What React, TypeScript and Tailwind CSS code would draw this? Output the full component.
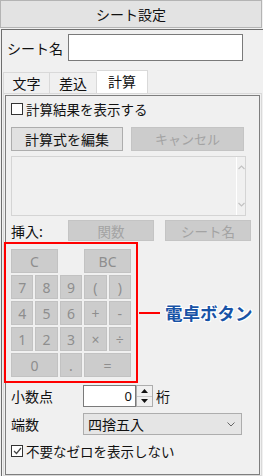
const jp = "font-['Noto_Sans_CJK_JP','Noto_Sans',sans-serif]";
const latin = "font-['Noto_Sans','Liberation_Sans',sans-serif]";

const CalcKey = ({ label, span }: { label: string; span?: boolean }) => (
  <div
    className={`${span ? "col-span-2" : ""} h-[24px] bg-[#cccccc] border border-[#c2c2c2] flex items-center justify-center text-[14px] text-[#8e8e8e] ${latin}`}
  >
    {label}
  </div>
);

const App = () => {
  return (
    <div className={`w-[263px] h-[476px] bg-[#f0f0f0] flex flex-col overflow-hidden text-[#111] ${jp}`}>
      {/* title */}
      <div className="h-[28px] w-[262px] shrink-0 border border-[#b4b4b4] bg-[#e3e3e3] flex items-center justify-center text-[14px] leading-[16px]">
        シート設定
      </div>

      <div className="mt-[1px] ml-[1px] flex-1 flex flex-col border-l border-t border-[#6e6e6e] min-h-0">
        {/* sheet name */}
        <div className="mt-[4px] h-[27px] flex items-center">
          <span className="pl-[5px] w-[66px] text-[14px] leading-[16px]">シート名</span>
          <div className="w-[175px] h-[27px] bg-white border border-[#7a7a7a]" />
        </div>

        {/* tabs */}
        <div className="mt-[9px] ml-[1px] h-[23px] flex items-end">
          <div className="w-[47px] h-[21px] border border-b-0 border-[#d9d9d9] flex items-center justify-center text-[14px] leading-[16px]">
            文字
          </div>
          <div className="w-[47px] h-[21px] border border-b-0 border-l-0 border-[#d9d9d9] flex items-center justify-center text-[14px] leading-[16px]">
            差込
          </div>
          <div className="w-[51px] h-[23px] bg-white border border-b-0 border-l-0 border-[#d9d9d9] flex items-center justify-center text-[14px] leading-[16px] pb-[2px]">
            計算
          </div>
        </div>

        <div className="ml-[1px] w-[259px] flex-1 border border-[#d9d9d9] p-[1px] min-h-0">
          <div className="h-[380px] border border-[#7e7e7e] bg-[#f0f0f0] flex flex-col">
            {/* show result */}
            <div className="mt-[4px] h-[18px] pl-[5px] flex items-center">
              <div className="w-[12px] h-[12px] border border-[#333] bg-white" />
              <span className="ml-[3px] text-[13.5px] leading-[16px]">計算結果を表示する</span>
            </div>

            {/* edit buttons */}
            <div className="mt-[9px] pl-[5px] flex">
              <div className="w-[112px] h-[24px] bg-[#e1e1e1] border border-[#adadad] flex items-center justify-center text-[14px] leading-[16px]">
                計算式を編集
              </div>
              <div className="ml-[8px] w-[113px] h-[24px] bg-[#cccccc] border border-[#c4c4c4] flex items-center justify-center text-[13px] leading-[16px] text-[#a3a3a3]">
                キャンセル
              </div>
            </div>

            {/* formula box */}
            <div className="mt-[5px] ml-[5px] w-[235px] h-[60px] border border-[#d4d4d4] flex">
              <div className="flex-1" />
              <div className="w-[9px] border-l border-white flex flex-col items-center justify-between py-[8px]">
                <svg width="7" height="5" viewBox="0 0 7 5">
                  <polyline points="0.5,4 3.5,1 6.5,4" fill="none" stroke="#c2c2c2" strokeWidth="1.2" />
                </svg>
                <svg width="7" height="5" viewBox="0 0 7 5">
                  <polyline points="0.5,1 3.5,4 6.5,1" fill="none" stroke="#c2c2c2" strokeWidth="1.2" />
                </svg>
              </div>
            </div>

            {/* insert */}
            <div className="mt-[4px] h-[21px] flex items-center">
              <span className="pl-[5px] w-[62px] text-[14px] leading-[16px]">挿入:</span>
              <div className="w-[86px] h-[21px] bg-[#cccccc] border border-[#c4c4c4] flex items-center justify-center text-[13.5px] leading-[16px] text-[#a3a3a3]">
                関数
              </div>
              <div className="ml-[11px] w-[86px] h-[21px] bg-[#cccccc] border border-[#c4c4c4] flex items-center justify-center text-[13.5px] leading-[16px] text-[#a3a3a3]">
                シート名
              </div>
            </div>

            {/* calculator keys */}
            <div className="mt-[1px] -ml-[2px] flex items-center">
              <div className="border-2 border-[#ff0000] px-[5px] pt-[5px] pb-[4px]">
                <div className="w-[120px] grid grid-cols-5 gap-x-[2px] gap-y-[2px]">
                  <CalcKey label="C" span />
                  <div />
                  <CalcKey label="BC" span />
                  <CalcKey label="7" />
                  <CalcKey label="8" />
                  <CalcKey label="9" />
                  <CalcKey label="(" />
                  <CalcKey label=")" />
                  <CalcKey label="4" />
                  <CalcKey label="5" />
                  <CalcKey label="6" />
                  <CalcKey label="+" />
                  <CalcKey label="-" />
                  <CalcKey label="1" />
                  <CalcKey label="2" />
                  <CalcKey label="3" />
                  <CalcKey label="×" />
                  <CalcKey label="÷" />
                  <CalcKey label="0" span />
                  <CalcKey label="." />
                  <CalcKey label="=" span />
                </div>
              </div>
              <div className="ml-[1px] w-[21px] h-[2px] bg-[#ff0000]" />
              <span className="ml-[5px] text-[17.5px] leading-[20px] font-bold text-[#1853a6] [text-shadow:0_0_2px_#fff,1px_1px_0_#fff,-1px_-1px_0_#fff,1px_-1px_0_#fff,-1px_1px_0_#fff]">
                電卓ボタン
              </span>
            </div>

            {/* decimal places */}
            <div className="mt-[2px] h-[22px] flex items-center">
              <span className="pl-[5px] w-[77px] text-[14px] leading-[16px]">小数点</span>
              <div className="w-[53px] h-[22px] bg-white border border-[#7a7a7a] flex items-center justify-end pr-[3px] text-[13px] leading-[16px]">
                <span className={latin}>0</span>
              </div>
              <div className="w-[17px] h-[22px] border border-[#adadad] bg-[#f0f0f0] flex flex-col">
                <div className="flex-1 flex items-center justify-center border-b border-[#c8c8c8]">
                  <svg width="7" height="4" viewBox="0 0 7 4">
                    <polygon points="0,4 3.5,0 7,4" fill="#111" />
                  </svg>
                </div>
                <div className="flex-1 flex items-center justify-center">
                  <svg width="7" height="4" viewBox="0 0 7 4">
                    <polygon points="0,0 7,0 3.5,4" fill="#111" />
                  </svg>
                </div>
              </div>
              <span className="ml-[3px] text-[14px] leading-[16px]">桁</span>
            </div>

            {/* rounding */}
            <div className="mt-[6px] h-[22px] flex items-center">
              <span className="pl-[5px] w-[77px] text-[14px] leading-[16px]">端数</span>
              <div className="w-[159px] h-[22px] bg-[#e5e5e5] border border-[#adadad] flex items-center justify-between pl-[4px] pr-[6px]">
                <span className="text-[14px] leading-[16px]">四捨五入</span>
                <svg width="8" height="5" viewBox="0 0 8 5">
                  <polyline points="0.5,0.5 4,4 7.5,0.5" fill="none" stroke="#666" strokeWidth="1" />
                </svg>
              </div>
            </div>

            {/* hide zero */}
            <div className="mt-[7px] h-[18px] pl-[5px] flex items-center">
              <div className="w-[12px] h-[12px] border border-[#333] bg-white flex items-center justify-center">
                <svg width="9" height="8" viewBox="0 0 9 8">
                  <polyline points="1,4 3.5,6.5 8,1" fill="none" stroke="#444" strokeWidth="1.2" />
                </svg>
              </div>
              <span className="ml-[3px] text-[13.5px] leading-[16px]">不要なゼロを表示しない</span>
            </div>
          </div>
        </div>
      </div>
    </div>
  );
};

export default App;
